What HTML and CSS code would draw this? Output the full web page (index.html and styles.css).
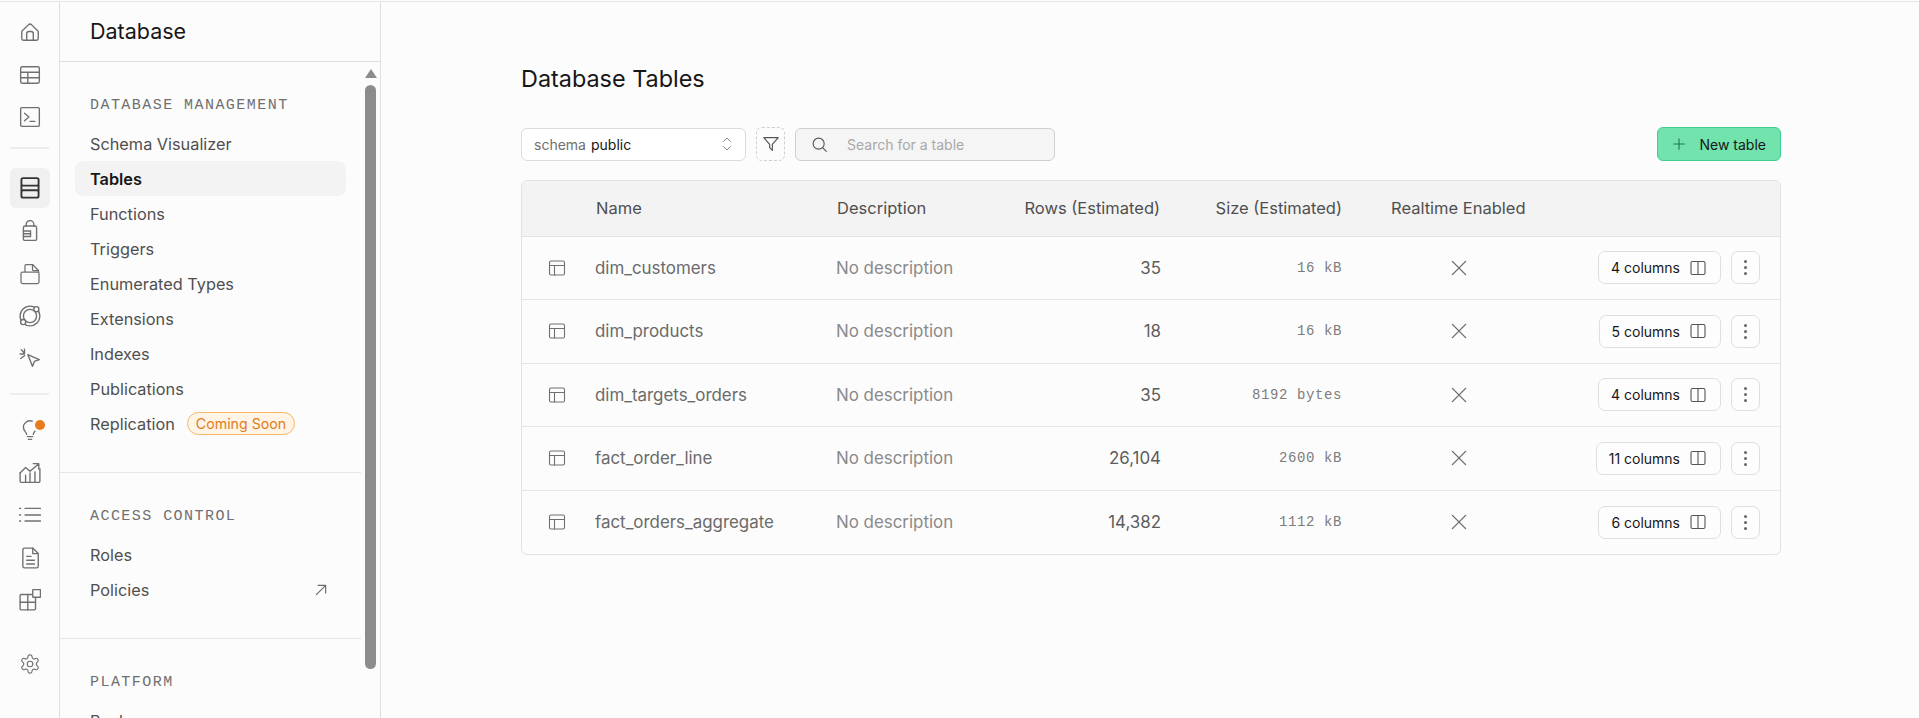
FILE: index.html
```html
<!DOCTYPE html>
<html lang="en">
	<head>
		<meta charset="UTF-8" />
		<meta name="viewport" content="width=device-width, initial-scale=1.0" />
		<link rel="stylesheet" href="styles.css">
		<title>Database Tables</title>
	</head>
	<body>
		<svg class="sprite" xmlns="http://www.w3.org/2000/svg">
			<symbol id="i-table" viewBox="0 0 20 20"><rect x="2.500" y="3" width="15" height="14" rx="1.500"/><path d="M2.500 7.500h15M7.500 7.500V17"/></symbol>
			<symbol id="i-cols" viewBox="0 0 20 20"><rect x="3" y="3.500" width="14" height="13" rx="1.500"/><path d="M10 3.500v13"/></symbol>
			<symbol id="i-x" viewBox="0 0 20 20"><path d="M4 4l12 12M16 4L4 16"/></symbol>
		</svg>

		<div class="app">
			<nav class="rail">
				<a class="rail-item"><svg viewBox="0 0 20 20"><path d="M3 8.800L8.700 3.300a2 2 0 0 1 2.600 0L17 8.800a1.500 1.500 0 0 1 .5 1.100V16a1.500 1.500 0 0 1-1.500 1.500H4A1.500 1.500 0 0 1 2.500 16V9.900a1.500 1.500 0 0 1 .5-1.100z"/><path d="M7 17.500V11.500a2 2 0 0 1 2-2h2a2 2 0 0 1 2 2v6"/></svg></a>
				<a class="rail-item"><svg viewBox="0 0 20 20"><rect x="1.500" y="2.500" width="17" height="15" rx="1.500"/><path d="M1.500 7.500h17M1.500 12.500h17M8 7.500v10"/></svg></a>
				<a class="rail-item"><svg viewBox="0 0 20 20"><rect x="1.500" y="1.500" width="17" height="17" rx="1"/><path d="M5 6.500l4 3.500-4 3.500M10 14h4.500"/></svg></a>
				<div class="rail-line"></div>
				<a class="rail-item active"><svg viewBox="0 0 20 20"><rect x="2.200" y="1" width="15.600" height="6.800" rx="1.500"/><rect x="2.200" y="12" width="15.600" height="6.800" rx="1.500"/><path d="M2.200 7.800v4.200M17.800 7.800v4.200"/></svg></a>
				<a class="rail-item"><svg viewBox="0 0 20 20"><path d="M6.500 5.500V4a3.500 3.500 0 0 1 7 0v1.500"/><path d="M5.500 5.500h9a1.500 1.500 0 0 1 1.500 1.500v10.500a1 1 0 0 1-1 1H5a1 1 0 0 1-1-1V7a1.500 1.500 0 0 1 1.500-1.500z"/><path d="M4 10h6.500v5H4M4 12.500h6.500"/></svg></a>
				<a class="rail-item"><svg viewBox="0 0 20 22"><path d="M5 9V2.500a1 1 0 0 1 1-1h6.500l6 6V10"/><path d="M12.500 1.500v5a1 1 0 0 0 1 1h5"/><rect x="1" y="9" width="18" height="11.500" rx="1.500" class="paper"/></svg></a>
				<a class="rail-item"><svg viewBox="0 0 20 20"><circle cx="10" cy="10" r="6"/><circle cx="10" cy="10" r="9"/><circle cx="15.800" cy="3.800" r="2.300" class="fill"/><circle cx="3.800" cy="15.500" r="2.300" class="fill"/></svg></a>
				<a class="rail-item"><svg viewBox="0 0 20 20"><path d="M8 6l10.500 4.500-4.500 1.700-1.700 4.500z"/><path d="M5 1v4M1 5.500h4M2 1.500l3 3.500M1.500 9.500L5 7"/></svg></a>
				<div class="rail-line low"></div>
				<a class="rail-item">
					<svg viewBox="0 0 20 20"><path d="M7 14c0-2-3-3-3-6.500a6 6 0 0 1 8-5.500M13 14c0-1 1-2 1.500-3M7.500 16h5M8.500 18.500h3"/></svg>
					<span class="dot"></span>
				</a>
				<a class="rail-item"><svg viewBox="0 0 20 20"><path d="M1 10l5-5 4 3.500L17.500 2M13 1.500h5v5"/><path d="M1 10v7.500a1 1 0 0 0 1 1h16a1 1 0 0 0 1-1V6M6 12v6.500M10 10v8.500M14.500 9v9.500"/></svg></a>
				<a class="rail-item"><svg viewBox="0 0 20 20"><path d="M5.500 4h14M5.500 10h14M5.500 15.500h14M.500 4h1M.500 10h1M.500 15.500h1"/></svg></a>
				<a class="rail-item"><svg viewBox="0 0 20 20"><path d="M3.500 2.500a1.500 1.500 0 0 1 1.500-1.500h7.500l5 5v11.500a1.500 1.500 0 0 1-1.500 1.500H5a1.500 1.500 0 0 1-1.500-1.500z"/><path d="M12.500 1v5h5M7 8.500h4M7 12h7M7 15.500h7"/></svg></a>
				<a class="rail-item"><svg viewBox="0 0 20 20"><rect x="1" y="5" width="14" height="14" rx="1"/><path d="M8 5v14M1 12h14"/><rect x="12.500" y=".5" width="7" height="7" rx=".5" class="paper"/></svg></a>
				<a class="rail-item settings"><svg viewBox="0 0 24 24"><path d="M12.220 2h-.44a2 2 0 0 0-2 2v.18a2 2 0 0 1-1 1.730l-.43.25a2 2 0 0 1-2 0l-.15-.08a2 2 0 0 0-2.730.73l-.22.38a2 2 0 0 0 .73 2.730l.15.1a2 2 0 0 1 1 1.720v.51a2 2 0 0 1-1 1.740l-.15.09a2 2 0 0 0-.73 2.730l.22.38a2 2 0 0 0 2.730.73l.15-.08a2 2 0 0 1 2 0l.43.25a2 2 0 0 1 1 1.730V20a2 2 0 0 0 2 2h.44a2 2 0 0 0 2-2v-.18a2 2 0 0 1 1-1.730l.43-.25a2 2 0 0 1 2 0l.15.08a2 2 0 0 0 2.730-.73l.22-.39a2 2 0 0 0-.73-2.730l-.15-.08a2 2 0 0 1-1-1.740v-.5a2 2 0 0 1 1-1.740l.15-.09a2 2 0 0 0 .73-2.730l-.22-.38a2 2 0 0 0-2.730-.73l-.15.08a2 2 0 0 1-2 0l-.43-.25a2 2 0 0 1-1-1.730V4a2 2 0 0 0-2-2z"/><circle cx="12" cy="12" r="3"/></svg></a>
			</nav>

			<aside class="side">
				<h2 class="side-title">Database</h2>
				<div class="side-body">
					<section class="side-group">
						<h3 class="side-label">DATABASE MANAGEMENT</h3>
						<a class="side-link">Schema Visualizer</a>
						<a class="side-link current">Tables</a>
						<a class="side-link">Functions</a>
						<a class="side-link">Triggers</a>
						<a class="side-link">Enumerated Types</a>
						<a class="side-link">Extensions</a>
						<a class="side-link">Indexes</a>
						<a class="side-link">Publications</a>
						<a class="side-link">Replication <span class="soon">Coming Soon</span></a>
					</section>
					<section class="side-group">
						<h3 class="side-label">ACCESS CONTROL</h3>
						<a class="side-link">Roles</a>
						<a class="side-link spread">Policies
							<svg class="ext" viewBox="0 0 12 12"><path d="M2 10l8-8M3.500 2H10v6.500"/></svg>
						</a>
					</section>
					<section class="side-group">
						<h3 class="side-label">PLATFORM</h3>
						<a class="side-link">Backups</a>
					</section>
				</div>
				<div class="scroll-arrow"></div>
				<div class="scroll-thumb"></div>
			</aside>

			<main class="main">
				<div class="content">
					<h1 class="page-title">Database Tables</h1>

					<div class="toolbar">
						<div class="schema">
							<span class="schema-key">schema</span>
							<span class="schema-val">public</span>
							<svg class="chev" viewBox="0 0 12 18"><path d="M2.500 6.500L6 3l3.500 3.500M2.500 11.500L6 15l3.500-3.500"/></svg>
						</div>
						<button class="filter"><svg viewBox="0 0 20 20"><path d="M2 3h16l-6.500 7.500V17l-3-3v-3.500z"/></svg></button>
						<div class="search">
							<svg viewBox="0 0 20 20"><circle cx="9" cy="9" r="6.500"/><path d="M14 14l4 4"/></svg>
							<span>Search for a table</span>
						</div>
						<button class="new-table">
							<svg viewBox="0 0 16 16"><path d="M8 2v12M2 8h12"/></svg>
							New table
						</button>
					</div>

					<div class="table-wrap">
						<table class="tables">
							<thead>
								<tr>
									<th class="c-icon"></th>
									<th class="c-name">Name</th>
									<th class="c-desc">Description</th>
									<th class="c-rows">Rows (Estimated)</th>
									<th class="c-size">Size (Estimated)</th>
									<th class="c-rt">Realtime Enabled</th>
									<th class="c-act"></th>
								</tr>
							</thead>
							<tbody>
								<tr>
									<td class="c-icon"><svg class="t-icon"><use href="#i-table"/></svg></td>
									<td class="c-name">dim_customers</td>
									<td class="c-desc">No description</td>
									<td class="c-rows">35</td>
									<td class="c-size">16 kB</td>
									<td class="c-rt"><svg class="x-icon"><use href="#i-x"/></svg></td>
									<td class="c-act"><div class="acts"><button class="cols">4 columns <svg><use href="#i-cols"/></svg></button><button class="more"><i></i><i></i><i></i></button></div></td>
								</tr>
								<tr>
									<td class="c-icon"><svg class="t-icon"><use href="#i-table"/></svg></td>
									<td class="c-name">dim_products</td>
									<td class="c-desc">No description</td>
									<td class="c-rows">18</td>
									<td class="c-size">16 kB</td>
									<td class="c-rt"><svg class="x-icon"><use href="#i-x"/></svg></td>
									<td class="c-act"><div class="acts"><button class="cols">5 columns <svg><use href="#i-cols"/></svg></button><button class="more"><i></i><i></i><i></i></button></div></td>
								</tr>
								<tr>
									<td class="c-icon"><svg class="t-icon"><use href="#i-table"/></svg></td>
									<td class="c-name">dim_targets_orders</td>
									<td class="c-desc">No description</td>
									<td class="c-rows">35</td>
									<td class="c-size">8192 bytes</td>
									<td class="c-rt"><svg class="x-icon"><use href="#i-x"/></svg></td>
									<td class="c-act"><div class="acts"><button class="cols">4 columns <svg><use href="#i-cols"/></svg></button><button class="more"><i></i><i></i><i></i></button></div></td>
								</tr>
								<tr>
									<td class="c-icon"><svg class="t-icon"><use href="#i-table"/></svg></td>
									<td class="c-name">fact_order_line</td>
									<td class="c-desc">No description</td>
									<td class="c-rows">26,104</td>
									<td class="c-size">2600 kB</td>
									<td class="c-rt"><svg class="x-icon"><use href="#i-x"/></svg></td>
									<td class="c-act"><div class="acts"><button class="cols">11 columns <svg><use href="#i-cols"/></svg></button><button class="more"><i></i><i></i><i></i></button></div></td>
								</tr>
								<tr>
									<td class="c-icon"><svg class="t-icon"><use href="#i-table"/></svg></td>
									<td class="c-name">fact_orders_aggregate</td>
									<td class="c-desc">No description</td>
									<td class="c-rows">14,382</td>
									<td class="c-size">1112 kB</td>
									<td class="c-rt"><svg class="x-icon"><use href="#i-x"/></svg></td>
									<td class="c-act"><div class="acts"><button class="cols">6 columns <svg><use href="#i-cols"/></svg></button><button class="more"><i></i><i></i><i></i></button></div></td>
								</tr>
							</tbody>
						</table>
					</div>
				</div>
			</main>
		</div>
	</body>
</html>
```

FILE: styles.css
```css
* {
	box-sizing: border-box;
}

body {
	margin: 0;
	height: 718px;
	overflow: hidden;
	background-color: #fcfcfc;
	color: #171717;
	font-family: "Inter", "Liberation Sans", sans-serif;
}

svg {
	fill: none;
	stroke: currentColor;
	stroke-linecap: round;
	stroke-linejoin: round;
}

.sprite {
	display: none;
}

.app {
	display: flex;
	height: 718px;
	margin-top: 1px;
	border-top: 1px solid #e6e6e6;
}

/* left icon rail */
.rail {
	flex: 0 0 60px;
	display: flex;
	flex-direction: column;
	align-items: center;
	gap: 2.600px;
	padding: 10px 0 35px;
	border-right: 1px solid #dfdfdf;
}

.rail-item {
	position: relative;
	display: flex;
	align-items: center;
	justify-content: center;
	flex: 0 0 40px;
	width: 40px;
	border-radius: 6px;
	color: #707070;

	svg {
		width: 22px;
		height: 22px;
		margin-left: 1px;
		stroke-width: 1.250;
	}

	.fill,
	.paper {
		fill: #fcfcfc;
	}
}

.rail-item.active {
	background-color: #f0f0f0;
	color: #333;

	svg {
		stroke-width: 1.700;
	}
}

.rail-item.settings {
	margin-top: auto;
}

.rail-line {
	flex: 0 0 2px;
	width: 39px;
	margin: 7px 0 17px;
	background-color: #ededed;
}

.rail-line.low {
	margin: 12px 0 12px;
}

.dot {
	position: absolute;
	top: 10px;
	right: 5px;
	width: 10px;
	height: 10px;
	border-radius: 50%;
	background-color: #e87b1c;
}

/* database sidebar */
.side {
	position: relative;
	flex: 0 0 321px;
	border-right: 1px solid #dfdfdf;
	overflow: hidden;
}

.side-title {
	height: 60px;
	margin: 0;
	padding: 0 0 2px 30px;
	border-bottom: 1px solid #dfdfdf;
	display: flex;
	align-items: center;
	font-size: 21.500px;
	font-weight: 400;
	color: #171717;
}

.side-body {
	width: 301px;
}

.side-group {
	padding: 33px 15px 31px;
	border-bottom: 1px solid #e6e6e6;
}

.side-group:last-child {
	border-bottom: none;
}

.side-label {
	margin: 0 0 9px;
	padding-left: 15px;
	font-family: "Liberation Mono", monospace;
	font-size: 15px;
	line-height: 22px;
	font-weight: 400;
	letter-spacing: 1.450px;
	color: #6f6f6f;
}

.side-link {
	display: flex;
	align-items: center;
	gap: 12px;
	height: 35px;
	padding: 0 15px;
	border-radius: 8px;
	font-size: 16.300px;
	color: #4f4f4f;
}

.side-link.current {
	background-color: #f3f3f3;
	color: #171717;
	font-weight: 600;
}

.side-link.spread {
	justify-content: space-between;
}

.ext {
	width: 14px;
	height: 14px;
	margin-right: 3px;
	color: #6a6a6a;
	stroke-width: 1;
}

.soon {
	height: 23px;
	padding: 0 8px;
	border: 1px solid #f5b768;
	border-radius: 12px;
	background-color: #fff4e5;
	color: #e07d1a;
	font-size: 14.200px;
	line-height: 21px;
}

.scroll-arrow {
	position: absolute;
	top: 67px;
	right: 3px;
	width: 0;
	height: 0;
	border-left: 6px solid transparent;
	border-right: 6px solid transparent;
	border-bottom: 9px solid #8c8c8c;
}

.scroll-thumb {
	position: absolute;
	top: 83px;
	right: 4px;
	width: 11px;
	height: 584px;
	border-radius: 6px;
	background-color: #8c8c8c;
}

/* main area */
.main {
	flex: 1;
	min-width: 0;
	padding-left: 2px;
}

.content {
	width: 1260px;
	margin: 0 auto;
	padding-top: 61px;
}

.page-title {
	margin: 0 0 32px;
	font-size: 23.400px;
	line-height: 32px;
	font-weight: 400;
}

.toolbar {
	display: flex;
	align-items: center;
	gap: 10px;
	height: 34px;
	margin-bottom: 19px;
}

.schema {
	display: flex;
	align-items: center;
	gap: 5px;
	width: 225px;
	height: 33px;
	padding: 0 12px;
	border: 1px solid #dcdcdc;
	border-radius: 6px;
	background-color: #fff;
	font-size: 14px;
}

.schema-key {
	color: #6f6f6f;
}

.schema-val {
	color: #171717;
}

.chev {
	width: 12px;
	height: 18px;
	margin-left: auto;
	color: #8a8a8a;
}

.filter {
	display: flex;
	align-items: center;
	justify-content: center;
	width: 29px;
	height: 34px;
	padding: 0;
	border: 1px dashed #cfcfcf;
	border-radius: 6px;
	background: none;
	color: #555;

	svg {
		width: 18px;
		height: 18px;
		stroke-width: 1.300;
	}
}

.search {
	display: flex;
	align-items: center;
	gap: 19px;
	width: 260px;
	height: 33px;
	padding: 0 15px;
	border: 1px solid #cfcfcf;
	border-radius: 6px;
	background-color: #f5f5f5;
	color: #a8a8a8;
	font-size: 14px;

	svg {
		width: 17px;
		height: 17px;
		color: #555;
		stroke-width: 1.300;
	}
}

.new-table {
	display: flex;
	align-items: center;
	gap: 14px;
	margin-left: auto;
	height: 34px;
	padding: 0 14px;
	border: 1px solid #3ecf8e;
	border-radius: 6px;
	background-color: #72e3ad;
	color: #171717;
	font-family: inherit;
	font-size: 14px;

	svg {
		width: 14px;
		height: 14px;
		color: #1f7a52;
		stroke-width: 1.300;
	}
}

.table-wrap {
	border: 1px solid #e2e2e2;
	border-radius: 6px;
	overflow: hidden;
}

.tables {
	width: 100%;
	border-collapse: collapse;
	table-layout: fixed;
	font-size: 16.900px;

	th {
		height: 55px;
		background-color: #f3f3f3;
		border-bottom: 1px solid #e2e2e2;
		font-size: 16.500px;
		font-weight: 400;
		color: #4f4f4f;
		text-align: left;
	}

	td {
		height: 63.500px;
		border-bottom: 1px solid #e6e6e6;
		color: #6a6a6a;
		padding: 0;
	}

	tr:last-child td {
		border-bottom: none;
	}

	.c-icon {
		width: 73px;
		padding-left: 25px;
	}

	.c-name {
		width: 241px;
	}

	.c-desc {
		width: 167px;
		color: #8a8a8a;
	}

	th.c-desc {
		color: #4f4f4f;
	}

	.c-rows {
		width: 158px;
		text-align: right;
	}

	td.c-rows {
		color: #5c5c5c;
	}

	.c-size {
		width: 182px;
		text-align: right;
	}

	td.c-size {
		font-family: "Liberation Mono", monospace;
		font-size: 14px;
		letter-spacing: .6px;
		padding-right: 1px;
		color: #7c7c7c;
	}

	.c-rt {
		width: 232px;
		padding-left: 48px;
	}

	td.c-rt {
		padding-left: 105px;
	}
}

.t-icon {
	display: block;
	width: 20px;
	height: 20px;
	color: #707070;
	stroke-width: 1.100;
}

.x-icon {
	display: block;
	width: 22px;
	height: 22px;
	color: #6a6a6a;
	stroke-width: 1.200;
}

.acts {
	display: flex;
	justify-content: flex-end;
	gap: 10px;
	padding-right: 20px;
}

.cols,
.more {
	height: 33px;
	border: 1px solid #dfdfdf;
	border-radius: 7px;
	background-color: #fdfdfd;
	font-family: inherit;
	color: #171717;
}

.cols {
	display: flex;
	align-items: center;
	gap: 8px;
	padding: 0 12px 0 12px;
	font-size: 14px;

	svg {
		width: 20px;
		height: 20px;
		color: #555;
		stroke-width: 1.100;
	}
}

.more {
	display: flex;
	flex-direction: column;
	align-items: center;
	justify-content: center;
	gap: 3px;
	width: 29px;
	padding: 0;

	i {
		width: 3px;
		height: 3px;
		border-radius: 50%;
		background-color: #666;
	}
}
```
